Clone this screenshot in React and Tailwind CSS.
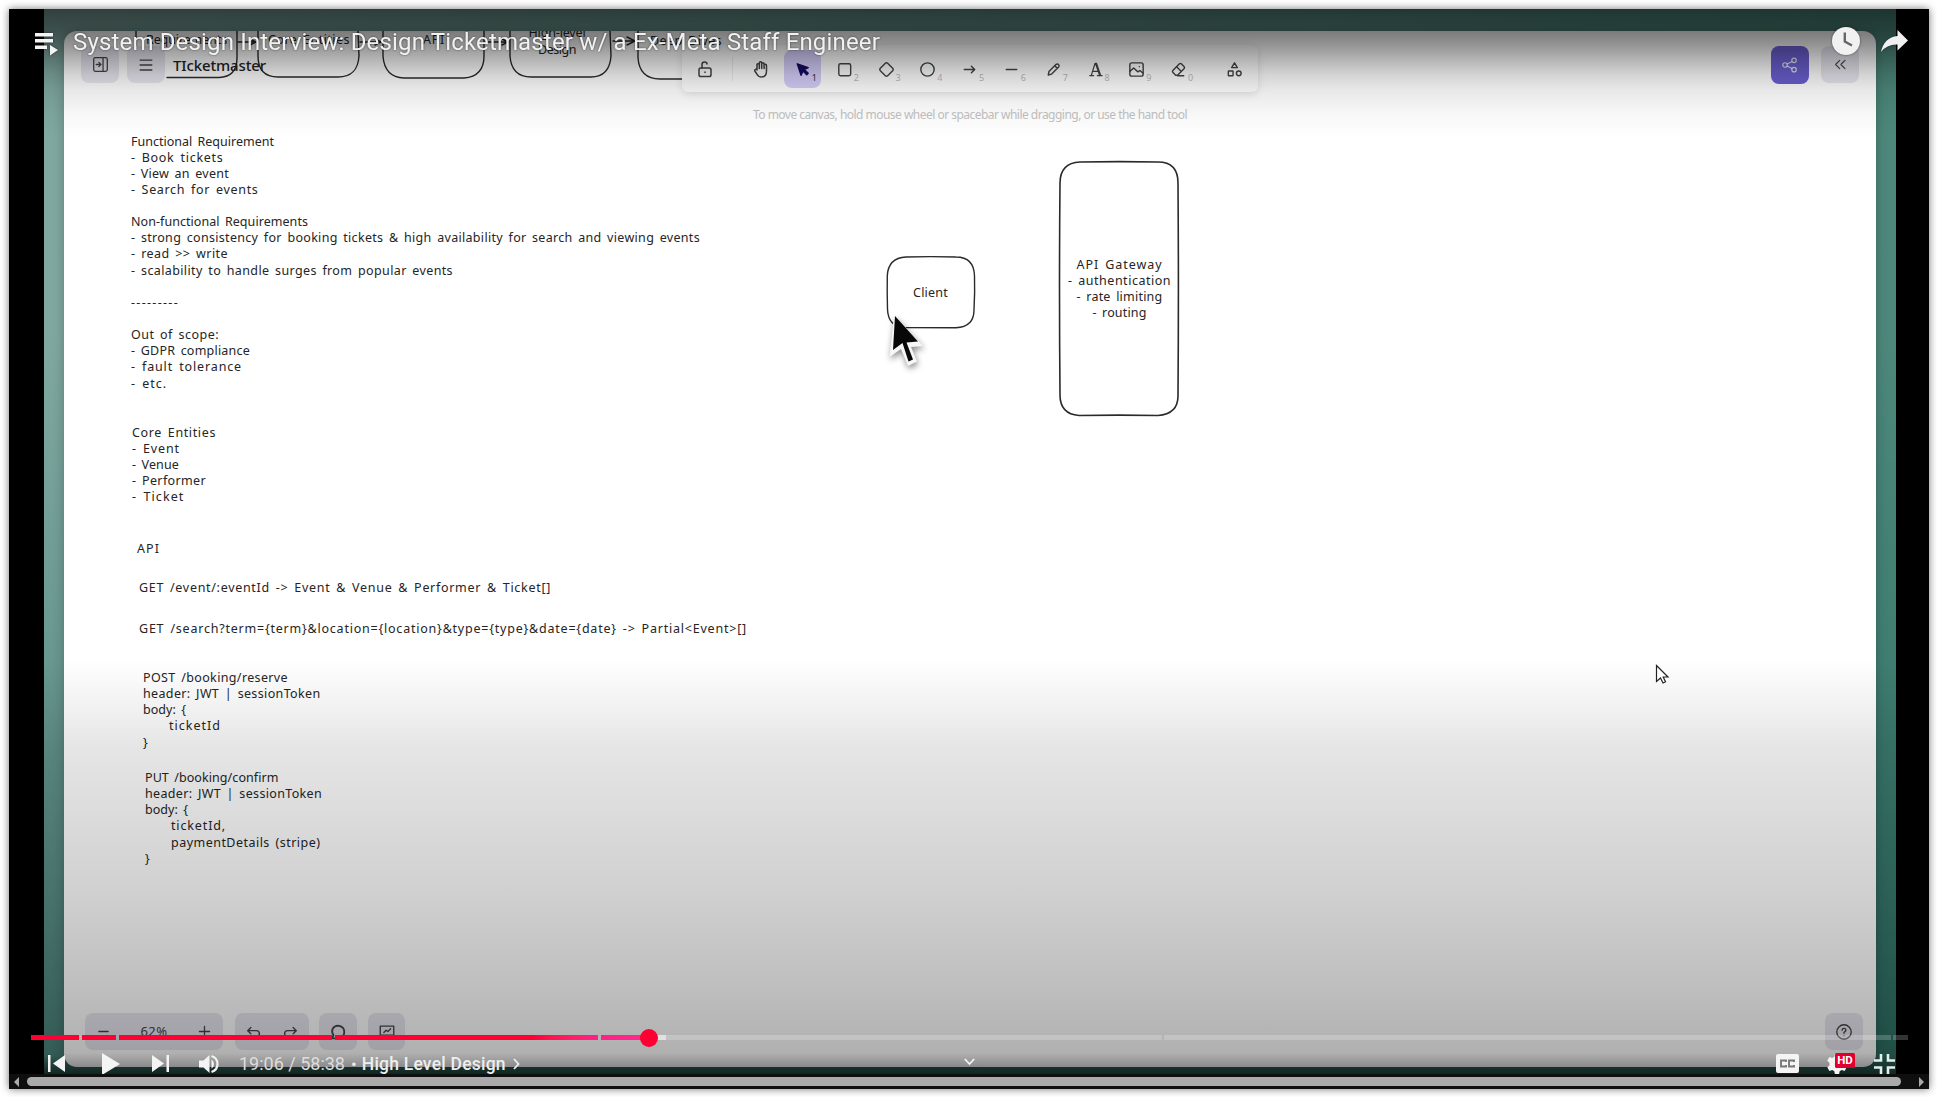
import { useLayoutEffect, useRef } from "react";

/* Spreads a line of text over a fixed width by adjusting its tracking. */
function Fit({ w, children, className = "" }) {
  const ref = useRef(null);
  useLayoutEffect(() => {
    const el = ref.current;
    el.style.letterSpacing = "0px";
    const natural = el.getBoundingClientRect().width;
    el.style.letterSpacing = (w - natural) / el.textContent.length + "px";
  }, [w, children]);
  return (
    <span className={"block whitespace-pre " + className}>
      <span ref={ref} className="inline-block">{children}</span>
    </span>
  );
}

const notes = [
  {
    pos: "left-[131px] top-[133.500px]",
    lines: [
      ["Functional Requirement", 143],
      ["- Book tickets", 92.5],
      ["- View an event", 98],
      ["- Search for events", 127.5],
      null,
      ["Non-functional Requirements", 177],
      ["- strong consistency for booking tickets & high availability for search and viewing events", 569],
      ["- read >> write", 97],
      ["- scalability to handle surges from popular events", 322],
      null,
      ["---------", 48],
      null,
      ["Out of scope:", 88],
      ["- GDPR compliance", 119],
      ["- fault tolerance", 111],
      ["- etc.", 36],
    ],
  },
  {
    pos: "left-[132px] top-[424.500px]",
    lines: [["Core Entities", 84], ["- Event", 48], ["- Venue", 47], ["- Performer", 74], ["- Ticket", 52.5]],
  },
  { pos: "left-[137px] top-[541px]", lines: [["API", 23]] },
  { pos: "left-[139px] top-[579.500px]", lines: [["GET /event/:eventId -> Event & Venue & Performer & Ticket[]", 412]] },
  { pos: "left-[139px] top-[620.500px]", lines: [["GET /search?term={term}&location={location}&type={type}&date={date} -> Partial<Event>[]", 608]] },
  {
    pos: "left-[143px] top-[670px]",
    lines: [["POST /booking/reserve", 145], ["header: JWT | sessionToken", 177.5], ["body: {", 43], ["ticketId", 52, "pl-[26px]"], ["}", 6]],
  },
  {
    pos: "left-[145px] top-[770px]",
    lines: [
      ["PUT /booking/confirm", 133.5],
      ["header: JWT | sessionToken", 177],
      ["body: {", 43],
      ["ticketId,", 55, "pl-[26px]"],
      ["paymentDetails (stripe)", 149.5, "pl-[26px]"],
      ["}", 6],
    ],
  },
];

function Note({ pos, lines }) {
  return (
    <div className={"absolute " + pos}>
      {lines.map((l, i) =>
        l ? (
          <Fit key={i} w={l[1]} className={"h-[16.15px] leading-[16.15px] " + (l[2] || "")}>{l[0]}</Fit>
        ) : (
          <div key={i} className="h-[16.15px]" />
        )
      )}
    </div>
  );
}

function Shapes() {
  return (
    <svg className="absolute left-0 top-0" width="1937" height="1097" fill="none" stroke="#2a2a2a" strokeWidth="1.4" strokeLinecap="round">
      {/* step boxes along the top */}
      <path d="M136 31V58M167 77.500H219C232 77 237 70 237 58V31" />
      <path d="M258 31V56C258 70 265 77 278 77H338C352 77 358 70 359 56L358 31" />
      <path d="M383 31V56C384 70 391 77.500 404 78H464C477 77 484 70 484 56V31" />
      <path d="M510 31V56C511 70 518 77 531 77H591C604 77 610 70 611 56L610 31" />
      <path d="M638 31V58C639 71 646 79 660 79H684" />
      <path d="M238 42H256M250 39L256 42L250 45M360 42H381M375 39L381 42L375 45M486 42H508M502 39L508 42L502 45M613 41H635M627 37L635 41L627 45" />
      {/* client */}
      <path d="M906 257Q931 256.200 956 257Q974 257 974.500 276Q975 292 974 310Q974 327 956 327.700Q931 327.500 905 327.500Q888 327 887.500 309Q887 292 887.300 276Q888 258 906 257Z" />
      {/* API gateway */}
      <path d="M1080 162Q1120 161.200 1158 162Q1178 162 1178 183Q1178.800 290 1178 396Q1178 414 1158 415.500Q1119 414.800 1079 415.500Q1060 414 1060 395Q1059 290 1060 183Q1060 163 1080 162Z" strokeWidth="1.600" />
    </svg>
  );
}

function Presenter() {
  return (
    <svg className="absolute left-[882px] top-[308px] drop-shadow-[1px_3px_3px_rgba(0,0,0,0.45)]" width="48" height="64" viewBox="882 308 48 64">
      <path d="M894 315L889.500 357L901 349L908 366L917 361.500L911 347L923 346Z" fill="#f6f6f6" />
      <path d="M895 316L893 350L902.500 343L908.500 361.500L913 359.500L906.500 342.500L918 341.500Z" fill="#080808" />
    </svg>
  );
}

function Ico({ children, s = 20, sw = 1.5, className = "" }) {
  return (
    <svg width={s} height={s} viewBox="0 0 20 20" fill="none" stroke="currentColor" strokeWidth={sw} strokeLinecap="round" strokeLinejoin="round" className={"shrink-0 " + className}>
      {children}
    </svg>
  );
}

const tools = [
  ["1", <path d="M4.500 4L8.500 16L10.500 11.500L14.500 15.500L16 14L11.800 10L16 8Z" fill="currentColor" />],
  ["2", <rect x="4" y="4" width="12.500" height="12.500" rx="1.800" />],
  ["3", <path d="M8.800 3.500Q10 2.300 11.200 3.500L16.500 8.800Q17.700 10 16.500 11.200L11.200 16.500Q10 17.700 8.800 16.500L3.500 11.200Q2.300 10 3.500 8.800Z" />],
  ["4", <circle cx="10" cy="10" r="7" />],
  ["5", <path d="M4.500 10H15.500M12 6.500L15.500 10L12 13.500" />],
  ["6", <path d="M4.500 10H15.500" />],
  ["7", <path d="M4.500 15.800L5.200 12.200L12.800 4.600Q14 3.600 15.300 4.800Q16.500 6 15.400 7.300L7.800 14.900Z M11.300 6L14 8.800" />],
  ["8", <path d="M4 16.500H8M12 16.500H17M5.500 16.500L9.500 3.500H11L15.500 16.500M7 12H12.500M10 3.500L14.500 16.500" strokeWidth="1.300" />],
  ["9", <g><rect x="3" y="3" width="14" height="14" rx="2" /><path d="M3 12L7 8.500L11.500 12.500L13.500 11L17 14M13 7H13.010" /></g>],
  ["0", <path d="M9 16.500H15.500M4 11L11 4Q12 3.200 13 4L16 7Q16.800 8 16 9L9 16H7L4 13Q3.200 12 4 11ZM8 7.200L13 12" />],
];

function Toolbar() {
  return (
    <div className="absolute left-[682px] top-[45px] flex h-[47px] w-[576px] items-center rounded-md bg-white pl-[13px] pt-px text-[#444] shadow-[0_2px_8px_rgba(0,0,0,0.12)]">
      <Ico>
        <rect x="4" y="9" width="12" height="8.500" rx="1.800" />
        <path d="M7 9V5.500Q7 3 9.500 3T12 5M10 13V13.500" />
      </Ico>
      <div className="ml-[17px] h-6 w-px bg-[#ededed]" />
      <Ico className="ml-[18px]">
        <path d="M6 11V5.500a1.200 1.200 0 0 1 2.300 0V4a1.200 1.200 0 0 1 2.400 0v1a1.200 1.200 0 0 1 2.400 0V6.500a1.200 1.200 0 0 1 2.400 0V12c0 4-2 6-5 6s-4-1.500-5-3.500L3.800 12a1.200 1.200 0 0 1 2.200-1M8.300 5.500V9.500M10.700 5V9.500M13.100 6V9.500" />
      </Ico>
      <div className="ml-[13px] flex gap-[4.800px]">
        {tools.map(([n, icon], i) => (
          <div key={n} className={"relative flex h-[38px] w-[37px] items-center justify-center rounded-lg " + (i === 0 ? "bg-[#d6d0fb] text-[#150b60]" : "")}>
            <Ico s={19}>{icon}</Ico>
            <span className={"absolute bottom-[6px] right-[4px] text-[9px] leading-none " + (i === 0 ? "text-[#333]" : "text-[#bbb]")}>{n}</span>
          </div>
        ))}
      </div>
      <Ico s={19} className="ml-[28px]">
        <path d="M10 3L13 8H7Z" />
        <rect x="3.500" y="11.500" width="5" height="5" rx="0.500" />
        <circle cx="14.500" cy="14" r="2.500" />
      </Ico>
    </div>
  );
}

function Chip({ children, className }) {
  return <div className={"flex h-[37px] items-center rounded-lg bg-[#e9e7f0] text-[#444] " + className}>{children}</div>;
}

function Board() {
  return (
    <div className="relative ml-5 mt-[22px] h-[1036px] w-[1812px] overflow-hidden rounded-[13px] bg-white font-['Noto_Sans',sans-serif] text-[12.500px] text-[#252525] shadow-[0_0_12px_rgba(0,0,0,0.25)]">
      <div className="absolute -left-16 -top-[31px] h-[1097px] w-[1937px]">
        <Shapes />
        <div className="[word-spacing:2px]">
          <div className="absolute left-[146px] top-[32px] leading-4"><Fit w={81}>Requirements</Fit></div>
          <div className="absolute left-[268px] top-[32px] leading-4"><Fit w={82}>Core Entities</Fit></div>
          <div className="absolute left-[423px] top-[32px] leading-4"><Fit w={22}>API</Fit></div>
          <div className="absolute left-[528px] top-[24px] flex w-[58px] flex-col items-center leading-[17px]"><Fit w={57}>High-level</Fit><Fit w={38}>Design</Fit></div>
          <div className="absolute left-[650px] top-[33px] leading-4"><Fit w={72}>Deep Dives</Fit></div>
          {notes.map((n, i) => <Note key={i} {...n} />)}
          <div className="absolute left-[887px] top-[284.500px] flex w-[87px] justify-center leading-4"><Fit w={35}>Client</Fit></div>
          <div className="absolute left-[1060px] top-[257px] flex w-[119px] flex-col items-center leading-[16.150px]">
            <Fit w={86}>API Gateway</Fit>
            <Fit w={103}>- authentication</Fit>
            <Fit w={86}>- rate limiting</Fit>
            <Fit w={54}>- routing</Fit>
          </div>
        </div>
        <Presenter />

        <div className="absolute left-[81px] top-[46px] flex items-center gap-[8px]">
          <Chip className="w-[38px] justify-center">
            <Ico s={17}><rect x="2" y="2" width="16" height="16" rx="2" /><path d="M13 2V18M5 10H10M8 7.500L10.500 10L8 12.500" /></Ico>
          </Chip>
          <Chip className="w-[38px] justify-center"><Ico s={18}><path d="M3.500 4.500H16.500M3.500 10H16.500M3.500 15.500H16.500" /></Ico></Chip>
          <span className="text-[15px] font-medium leading-5 text-[#222]"><Fit w={93}>TIcketmaster</Fit></span>
        </div>
        <Toolbar />
        <div className="absolute left-[753px] top-[106px] text-[12px] leading-[18px] text-[#c2c2c2]">
          <Fit w={434}>To move canvas, hold mouse wheel or spacebar while dragging, or use the hand tool</Fit>
        </div>
        <div className="absolute left-[1771px] top-[46px] flex gap-[12px]">
          <div className="flex h-[38px] w-[38px] items-center justify-center rounded-lg bg-[#6a5fd0] text-white/80">
            <Ico s={18} sw={1.3}><circle cx="4.500" cy="10" r="2.500" /><circle cx="14.500" cy="4.800" r="2.500" /><circle cx="14.500" cy="15.200" r="2.500" /><path d="M6.800 8.900L12.300 6M6.800 11.100L12.300 14" /></Ico>
          </div>
          <Chip className="w-[38px] justify-center"><Ico s={15}><path d="M9 4.500L3.500 10L9 15.500M16 4.500L10.500 10L16 15.500" /></Ico></Chip>
        </div>

        <div className="absolute left-[85px] top-[1013px] flex">
          <Chip className="w-[138px] justify-between px-[10px]">
            <Ico s={17}><path d="M4.500 10H15.500" /></Ico>
            <span className="text-[13px]"><Fit w={27}>62%</Fit></span>
            <Ico s={17}><path d="M4 10H16M10 4V16" /></Ico>
          </Chip>
          <Chip className="ml-3 w-[74px] justify-center gap-[18px]">
            <Ico s={18}><path d="M6.500 12L3 8.500L6.500 5M3 8.500H12.500Q16 8.500 16 12T12.500 15.500" /></Ico>
            <Ico s={18}><path d="M13.500 12L17 8.500L13.500 5M17 8.500H7.500Q4 8.500 4 12T7.500 15.500" /></Ico>
          </Chip>
          <Chip className="ml-[10px] w-[38px] justify-center"><Ico s={18} sw={2}><path d="M3.500 17L5 13.500Q2.500 10 4 6.500Q6 3 10 3Q17 4 17 10T10 17Z" /></Ico></Chip>
          <Chip className="ml-[11px] w-[37px] justify-center"><Ico s={18}><path d="M2.500 3.500H17.500V13.500H2.500ZM10 13.500V17.500M7 17.500H13M6.500 10.500L9 8L11 9.500L14 6.500" /></Ico></Chip>
        </div>
        <Chip className="absolute left-[1825px] top-[1013px] w-[38px] justify-center">
          <Ico s={18}><circle cx="10" cy="10" r="8" /><path d="M7.800 8Q8 6 10 6T12.200 8Q12 9.500 10 10.300V11.500M10 14V14.100" /></Ico>
        </Chip>
      </div>
    </div>
  );
}

function ProgressBar() {
  return (
    <div className="relative ml-[22px] flex h-[5px] w-[1877px]">
      <div className="w-[48px] bg-[#ff0033]" />
      <div className="ml-[3px] w-[34px] bg-[#ff0033]" />
      <div className="ml-[3px] w-[213px] bg-[#ff0033]" />
      <div className="ml-[3px] w-[263px] bg-linear-to-r from-[#ff0033] from-75% to-[#ff2285]" />
      <div className="ml-[3px] w-[48px] bg-linear-to-r from-[#ff2285] to-[#ff2791]" />
      <div className="w-[17px] bg-white/60" />
      <div className="w-[496px] bg-white/20" />
      <div className="ml-[2px] w-[727px] bg-white/20" />
      <div className="ml-[2px] w-[15px] bg-white/20" />
      <div className="absolute -top-[6.500px] left-[608.500px] size-[18px] rounded-full bg-[#ff0033]" />
    </div>
  );
}

function Controls() {
  return (
    <div className="flex h-[34px] items-center overflow-hidden pl-[39px] pt-[13px] font-['Roboto',sans-serif] text-[#eee]">
      <svg width="17" height="17" viewBox="0 0 17 17" fill="#f4f4f4"><path d="M0 0H2.500V17H0ZM17 0V17L5 8.500Z" /></svg>
      <svg className="ml-[37px]" width="18" height="22" viewBox="0 0 18 22" fill="#f4f4f4"><path d="M0 0L18 11L0 22Z" /></svg>
      <svg className="ml-[32px]" width="17" height="17" viewBox="0 0 17 17" fill="#f4f4f4"><path d="M14.500 0H17V17H14.500ZM0 0V17L12 8.500Z" /></svg>
      <svg className="ml-[30px]" width="21" height="20" viewBox="0 0 21 20" fill="#f4f4f4">
        <path d="M0 6.500V13.500H4.500L10.500 19V1L4.500 6.500Z" />
        <path d="M12.500 5.500Q15 7 15 10T12.500 14.500Z" />
        <path d="M12.500 2Q18.500 4 18.500 10T12.500 18" fill="none" stroke="#f4f4f4" strokeWidth="2.200" />
      </svg>
      <span className="ml-[19px] text-[18px] leading-6 text-[#ddd]"><Fit w={106}>19:06 / 58:38</Fit></span>
      <span className="ml-[6px] text-[17px] leading-6">•</span>
      <span className="ml-[5px] text-[17.500px] font-medium leading-6"><Fit w={144}>High Level Design</Fit></span>
      <svg className="ml-[7px]" width="7" height="12" viewBox="0 0 7 12" fill="none" stroke="#eee" strokeWidth="1.800"><path d="M1 1L5.500 6L1 11" /></svg>
      <svg className="mb-[3px] ml-[444px]" width="11" height="8" viewBox="0 0 11 8" fill="none" stroke="#f4f4f4" strokeWidth="1.800"><path d="M0.800 1L5.500 6L10.200 1" /></svg>
      <div className="ml-auto flex items-center pr-[34px]">
        <svg width="23" height="19" viewBox="0 0 23 19"><rect width="23" height="19" rx="2" fill="#f4f4f4" /><path d="M10 8V6.500H5V12.500H10V11M18 8V6.500H13V12.500H18V11" fill="none" stroke="#777" strokeWidth="1.900" /></svg>
        <div className="relative ml-[27px] mt-[1px] h-[22px] w-[31px]">
          <svg width="22" height="22" viewBox="0 0 24 24" fill="#f4f4f4"><path fillRule="evenodd" d="M9.700 1H14.300L14.900 4.200L17.200 5.500L20.300 4.400L22.600 8.400L20.200 10.500V13.500L22.600 15.600L20.300 19.600L17.200 18.500L14.900 19.800L14.300 23H9.700L9.100 19.800L6.800 18.500L3.700 19.600L1.400 15.600L3.800 13.500V10.500L1.400 8.400L3.700 4.400L6.800 5.500L9.100 4.200ZM12 9.500A2.500 2.500 0 1 0 12 14.500A2.500 2.500 0 1 0 12 9.500Z" /></svg>
          <span className="absolute left-[9px] top-0 flex h-[15px] w-[20px] items-center justify-center rounded-[1.500px] bg-[#e1002d] text-[11.500px] font-bold leading-none text-white">HD</span>
        </div>
        <svg className="ml-[17px] mt-px" width="21" height="20" viewBox="0 0 21 20" fill="none" stroke="#e4eeec" strokeWidth="2.600"><path d="M0 6.500H7V0M14 0V6.500H21M0 13.500H7V20M14 20V13.500H21" /></svg>
      </div>
    </div>
  );
}

function TopBar() {
  return (
    <div className="flex items-start pl-[26px] pr-[21px] pt-[18px] drop-shadow-[0_0_1px_rgba(0,0,0,0.5)]">
      <svg className="mt-[6px]" width="24" height="23" viewBox="0 0 24 23" fill="#f4f4f4"><path d="M0 0H18V3.500H0ZM0 6H18V9.500H0ZM0 12.500H12V16H0ZM15 12L23 17L15 22.500Z" /></svg>
      <span className="ml-[14px] mt-px font-['Roboto',sans-serif] text-[24px] leading-[28px] text-[#f1f1f1]"><Fit w={807}>System Design Interview: Design Ticketmaster w/ a Ex-Meta Staff Engineer</Fit></span>
      <svg className="ml-auto" width="28" height="28" viewBox="0 0 28 28"><circle cx="14" cy="14" r="14" fill="#f1f1f1" /><path d="M12.800 5.500V14.500L20 18.500" fill="none" stroke="#666" strokeWidth="2.400" /></svg>
      <svg className="ml-[21px] mt-[3px]" width="27" height="22" viewBox="0 0 27 22" fill="#f1f1f1"><path d="M16.500 0L27 10.500L16.500 20.500V14.500Q6 14 0 22Q3 7.500 16.500 6Z" /></svg>
    </div>
  );
}

function Scrollbar() {
  return (
    <div className="flex h-[15px] items-center bg-[#0f0f0f] px-[5px]">
      <svg width="5" height="10" viewBox="0 0 5 10" fill="#aaa"><path d="M5 0V10L0 5Z" /></svg>
      <div className="ml-[8px] h-[9px] w-[1874px] rounded-full bg-[#aaa]" />
      <svg className="ml-auto" width="5" height="10" viewBox="0 0 5 10" fill="#aaa"><path d="M0 0V10L5 5Z" /></svg>
    </div>
  );
}

export default function App() {
  return (
    <div className="h-[1097px] w-[1937px] overflow-hidden bg-white pl-[9px] pt-[9px]">
      <div className="grid h-[1080px] w-[1920px] bg-black shadow-[0_0_8px_rgba(0,0,0,0.55)]">
        <div className="[grid-area:1/1] ml-[35px] mr-[33px] overflow-hidden bg-[linear-gradient(to_bottom,transparent_30%,rgba(0,80,70,0.4)_97%,#285950_98.5%),linear-gradient(to_right,#80a8a1,#4d887b)]">
          <Board />
        </div>
        <div className="[grid-area:1/1] z-10 flex flex-col justify-between">
          <div className="h-[130px] bg-[linear-gradient(to_bottom,rgba(0,0,0,0.62)_0px,rgba(0,0,0,0.52)_22px,rgba(0,0,0,0.42)_36px,rgba(0,0,0,0.29)_51px,rgba(0,0,0,0.17)_66px,rgba(0,0,0,0.09)_81px,rgba(0,0,0,0.03)_105px,transparent_130px)]">
            <TopBar />
          </div>
          <div>
            <div className="flex h-[415px] flex-col justify-end bg-[linear-gradient(to_bottom,transparent_0px,rgba(0,0,0,0.1)_90px,rgba(0,0,0,0.19)_240px,rgba(0,0,0,0.25)_325px,rgba(0,0,0,0.31)_394px,rgba(0,0,0,0.46)_408px,rgba(0,0,0,0.55)_415px)]">
              <ProgressBar />
              <Controls />
            </div>
            <Scrollbar />
          </div>
        </div>
      </div>
      {/* pointer */}
      <svg className="fixed left-[1655px] top-[664px] z-20" width="15" height="21" viewBox="0 0 15 21" fill="#fff" stroke="#222" strokeWidth="1.200"><path d="M1.500 1.500V17.500L5.500 14L8 19L10.500 17.800L8.200 13H13Z" /></svg>
    </div>
  );
}
